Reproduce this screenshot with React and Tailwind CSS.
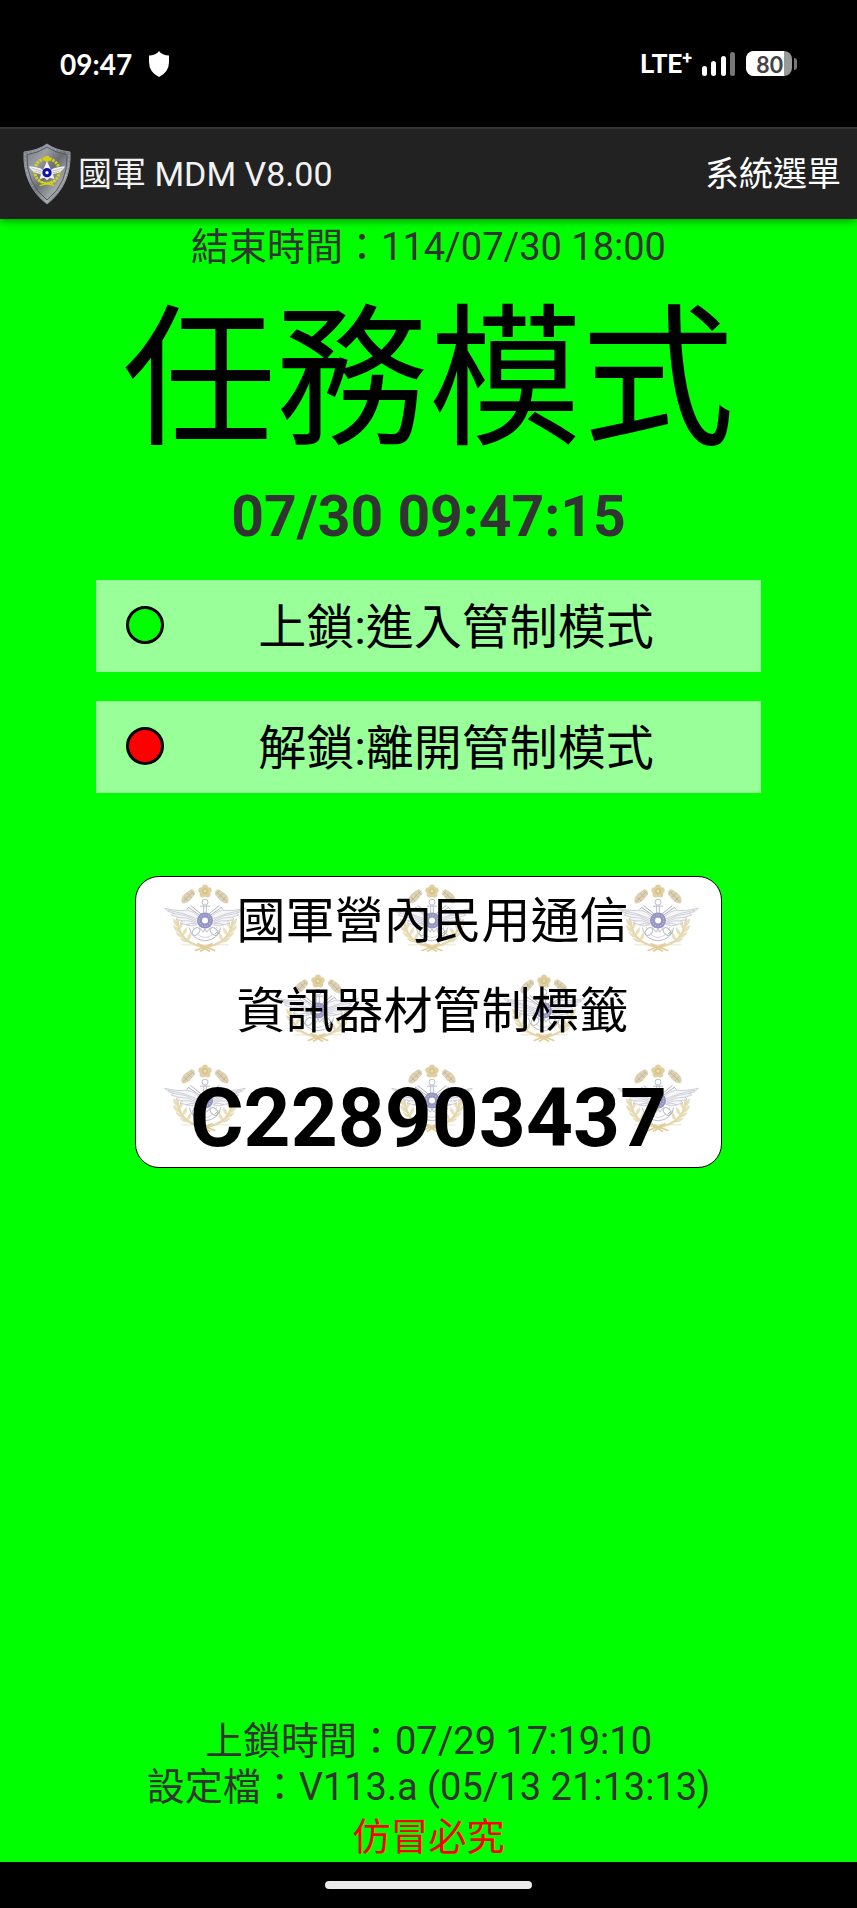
import React from "react";

const WING = (
  <g>
    <path
      d="M2 72 Q40 82 70 78 Q92 82 104 98 L98 122 Q84 128 66 122 L48 116 Q52 112 56 110 L36 106 Q38 101 42 99 L22 93 Q24 88 30 87 L12 82 Z"
      fill="#f6f6f9"
      stroke="#b8b8c4"
      strokeWidth="2"
    />
    <path
      d="M12 78 Q60 86 100 104 M30 88 Q66 90 98 109 M42 99 Q70 98 97 113 M56 110 Q76 107 96 117 M66 122 Q82 114 97 120"
      fill="none"
      stroke="#bcbcc8"
      strokeWidth="2"
    />
    <path d="M74 70 L108 94 M80 64 L112 90 M68 76 L76 68" stroke="#b0b0bc" strokeWidth="3" />
  </g>
);

const BRANCH = (
  <g>
    <path d="M52 52 Q52 36 66 26 L82 15 Q94 16 93 30 L80 46 Q70 58 56 58 Z" fill="#ddd2b4" />
    <path d="M58 52 L86 24 M60 38 L72 50 M70 28 L82 40 M80 20 L90 30" stroke="#c2b598" strokeWidth="3" />
    <path
      d="M40 108 Q42 150 74 172 Q94 184 124 190"
      fill="none"
      stroke="#e6d8ae"
      strokeWidth="7"
    />
    <path
      d="M38 126 Q28 120 28 104 Q38 108 42 126 M44 144 Q30 140 28 124 Q42 128 48 146 M56 160 Q40 158 36 144 Q50 148 60 162 M72 174 Q54 174 48 162 Q62 162 76 174 M48 134 Q58 126 56 110 Q46 118 46 132 M58 152 Q70 146 68 130 Q58 136 56 150 M72 168 Q84 162 80 146 Q70 154 70 166"
      fill="#eadfba"
      stroke="#dccda0"
      strokeWidth="1"
    />
  </g>
);

function Emblem() {
  return (
    <svg viewBox="0 0 246 203" className="h-[68px] w-[82px] shrink-0" aria-hidden="true">
      {BRANCH}
      <g transform="translate(246 0) scale(-1 1)">{BRANCH}</g>
      <g fill="#e0d0a0">
        <circle cx="123" cy="10" r="9" />
        <circle cx="134" cy="18" r="9" />
        <circle cx="130" cy="31" r="9" />
        <circle cx="116" cy="31" r="9" />
        <circle cx="112" cy="18" r="9" />
        <circle cx="123" cy="21" r="9" fill="#d6c18a" />
        <circle cx="123" cy="21" r="4" fill="#eee0b2" />
      </g>
      <g fill="none" stroke="#bcbcc8" strokeWidth="3">
        <circle cx="123" cy="54" r="9" />
        <path d="M108 66 H138 M119 64 V88 M127 64 V88" />
        <path d="M76 130 Q82 166 123 170 Q164 166 170 130" />
        <path d="M88 128 Q96 158 123 160 Q150 158 158 128" strokeWidth="2" />
        <ellipse cx="96" cy="142" rx="13" ry="9" transform="rotate(-45 96 142)" fill="#ffffff" />
        <ellipse cx="150" cy="142" rx="13" ry="9" transform="rotate(45 150 142)" fill="#ffffff" />
        <path d="M106 130 L118 144 L123 134 L128 144 L140 130" />
      </g>
      {WING}
      <g transform="translate(246 0) scale(-1 1)">{WING}</g>
      <path d="M152 150 L164 140 M158 154 L168 142" stroke="#9fb59f" strokeWidth="3" />
      <path d="M52 182 H194" stroke="#e3d6b0" strokeWidth="2" />
      <path
        d="M92 200 L146 178 M154 200 L100 178 M108 202 L138 184 M138 202 L108 184"
        fill="none"
        stroke="#dfcc98"
        strokeWidth="5"
      />
      <circle cx="123" cy="109" r="24" fill="#9494c2" />
      <circle cx="123" cy="109" r="17" fill="none" stroke="#b8b8dc" strokeWidth="4" strokeDasharray="4 4" />
      <circle cx="123" cy="109" r="9" fill="#ffffff" />
    </svg>
  );
}

function HeaderShield() {
  return (
    <svg viewBox="0 0 144 186" className="h-[62px] w-12 shrink-0" aria-hidden="true">
      <defs>
        <linearGradient id="steel" x1="0" y1="0" x2="1" y2="1">
          <stop offset="0" stopColor="#70757b" />
          <stop offset="0.3" stopColor="#9b9fa4" />
          <stop offset="0.5" stopColor="#6a6d72" />
          <stop offset="0.72" stopColor="#a4a7ab" />
          <stop offset="1" stopColor="#3b4047" />
        </linearGradient>
      </defs>
      <path
        d="M72 3 Q46 22 3 27 Q-2 126 72 183 Q146 126 141 27 Q98 22 72 3 Z"
        fill="url(#steel)"
        stroke="#8d949c"
        strokeWidth="3"
      />
      <path
        d="M72 12 Q48 29 12 35 Q8 120 72 171 Q136 120 132 35 Q96 29 72 12 Z"
        fill="none"
        stroke="#555b63"
        strokeWidth="3"
      />
      <path
        d="M72 7 Q47 25 7 31 Q3 123 72 178 Q141 123 137 31 Q97 25 72 7 Z"
        fill="none"
        stroke="#e3e6e9"
        strokeWidth="2"
        strokeDasharray="2 10"
      />
      <circle cx="72" cy="84" r="37" fill="none" stroke="#d6d21a" strokeWidth="9" strokeDasharray="7 3" />
      <circle cx="72" cy="47" r="9" fill="#d6cf10" />
      <path d="M50 116 L94 128 M94 116 L50 128" stroke="#d6d21a" strokeWidth="4" />
      <path
        d="M18 70 Q44 72 60 80 L68 64 L72 54 L76 64 L84 80 Q100 72 126 70 Q120 84 104 90 L90 94 L94 108 L80 104 L72 112 L64 104 L50 108 L54 94 L40 90 Q24 84 18 70 Z"
        fill="#f2f2f2"
      />
      <path d="M26 76 L56 84 M118 76 L88 84 M34 84 L56 90 M110 84 L88 90" stroke="#a5a8ac" strokeWidth="2" />
      <circle cx="72" cy="89" r="14" fill="#0c12a8" />
      <circle cx="72" cy="89" r="5" fill="#ffffff" />
    </svg>
  );
}

function StatusBar() {
  return (
    <div className="flex h-[127px] items-center justify-between px-[60px] text-white">
      <div className="flex items-center gap-4">
        <time className="font-['Lato',sans-serif] text-[28px] leading-8 font-bold">09:47</time>
        <svg viewBox="0 0 22 26" className="h-[26px] w-[22px]" aria-hidden="true">
          <path d="M11 0 Q12 2 15 3.2 Q18 4.400 21 4.500 V11 Q21 21 11 26 Q1 21 1 11 V4.500 Q4 4.400 7 3.200 Q10 2 11 0 Z" fill="#fff" />
        </svg>
      </div>
      <div className="flex items-center gap-[10px]">
        <div className="flex items-start font-['Liberation_Sans_Narrow','Roboto',sans-serif] font-bold">
          <span className="text-[26px] leading-7">LTE</span>
          <span className="text-lg leading-4">+</span>
        </div>
        <svg viewBox="0 0 34 24" className="h-6 w-[34px]" aria-hidden="true">
          <rect x="0" y="14" width="5" height="10" rx="2.500" fill="#fff" />
          <rect x="9" y="9" width="5" height="15" rx="2.500" fill="#fff" />
          <rect x="19" y="4" width="5" height="20" rx="2.500" fill="#fff" />
          <rect x="28" y="0" width="5" height="24" rx="2.500" fill="#777" />
        </svg>
        <div className="flex items-center gap-[2px]">
          <div className="flex h-[25px] w-[46px] overflow-hidden rounded-lg bg-[#999]">
            <span className="flex w-[38px] items-center justify-end bg-white pr-px font-['Lato',sans-serif] text-[23px] leading-6 font-bold text-[#444]">
              80
            </span>
          </div>
          <span className="h-3 w-[3px] rounded-r-sm bg-[#777]" />
        </div>
      </div>
    </div>
  );
}

function ModeButton({ dot, children }) {
  return (
    <button type="button" className="flex h-[92px] w-full items-center bg-[#99ff99] pt-[3px] pr-[14px] pl-[29px] text-5xl text-black">
      <svg viewBox="0 0 40 40" className="mb-[5px] h-10 w-10 shrink-0" aria-hidden="true">
        <circle cx="20" cy="20" r="17.500" className={dot} stroke="#000" strokeWidth="3" />
      </svg>
      <span className="flex-1 text-center leading-[60px]">{children}</span>
    </button>
  );
}

export default function App() {
  return (
    <div className="flex min-h-screen flex-col bg-black font-['Roboto','Noto_Sans_CJK_TC',sans-serif]">
      <StatusBar />
      <header className="relative flex h-[92px] items-center justify-between border-t-2 border-[#333] bg-[#222] pr-4 pl-[23px] text-[34px] leading-10 text-[#f2f2f2] shadow-[0_2px_8px_rgba(0,0,0,0.4)]">
        <div className="flex items-center gap-[7px]">
          <HeaderShield />
          <h1>國軍 MDM V8.00</h1>
        </div>
        <button type="button" className="text-white">系統選單</button>
      </header>

      <main className="flex flex-1 flex-col bg-[#00ff00] text-center">
        <p className="text-[38px] leading-[56px] text-[#333]">結束時間：114/07/30 18:00</p>
        <h2 className="text-[153px] leading-[212px] text-black">任務模式</h2>
        <time className="text-[57px] leading-[60px] font-bold text-[#333]">07/30 09:47:15</time>

        <div className="mt-[33px] flex flex-col gap-[29px] px-24">
          <ModeButton dot="fill-[#00ff00]">上鎖:進入管制模式</ModeButton>
          <ModeButton dot="fill-[#ff0000]">解鎖:離開管制模式</ModeButton>
        </div>

        <section className="relative mx-[135px] mt-[83px] h-[292px] overflow-hidden rounded-3xl border border-black bg-white text-black">
          <div className="absolute inset-x-0 top-[7px] flex flex-col gap-[22px]">
            <div className="flex justify-between pr-[22px] pl-7">
              <Emblem />
              <Emblem />
              <Emblem />
            </div>
            <div className="flex justify-between pr-[136px] pl-[141px]">
              <Emblem />
              <Emblem />
            </div>
            <div className="flex justify-between pr-[22px] pl-7">
              <Emblem />
              <Emblem />
              <Emblem />
            </div>
          </div>
          <div className="relative">
            <p className="pl-2 text-[49px] leading-[90px]">
              國軍營內民用通信
              <br />
              資訊器材管制標籤
            </p>
            <p className="text-[82px] leading-[122px] font-bold">C228903437</p>
          </div>
        </section>

        <footer className="mt-auto text-[38px] text-[#333]">
          <p className="leading-[46px]">上鎖時間：07/29 17:19:10</p>
          <p className="mb-[2px] leading-[46px]">設定檔：V113.a (05/13 21:13:13)</p>
          <p className="leading-[50px] text-[#ff0000]">仿冒必究</p>
        </footer>
      </main>

      <div className="flex h-[46px] items-center justify-center">
        <span className="h-2 w-[207px] rounded-full bg-[#eaeaea]" />
      </div>
    </div>
  );
}
